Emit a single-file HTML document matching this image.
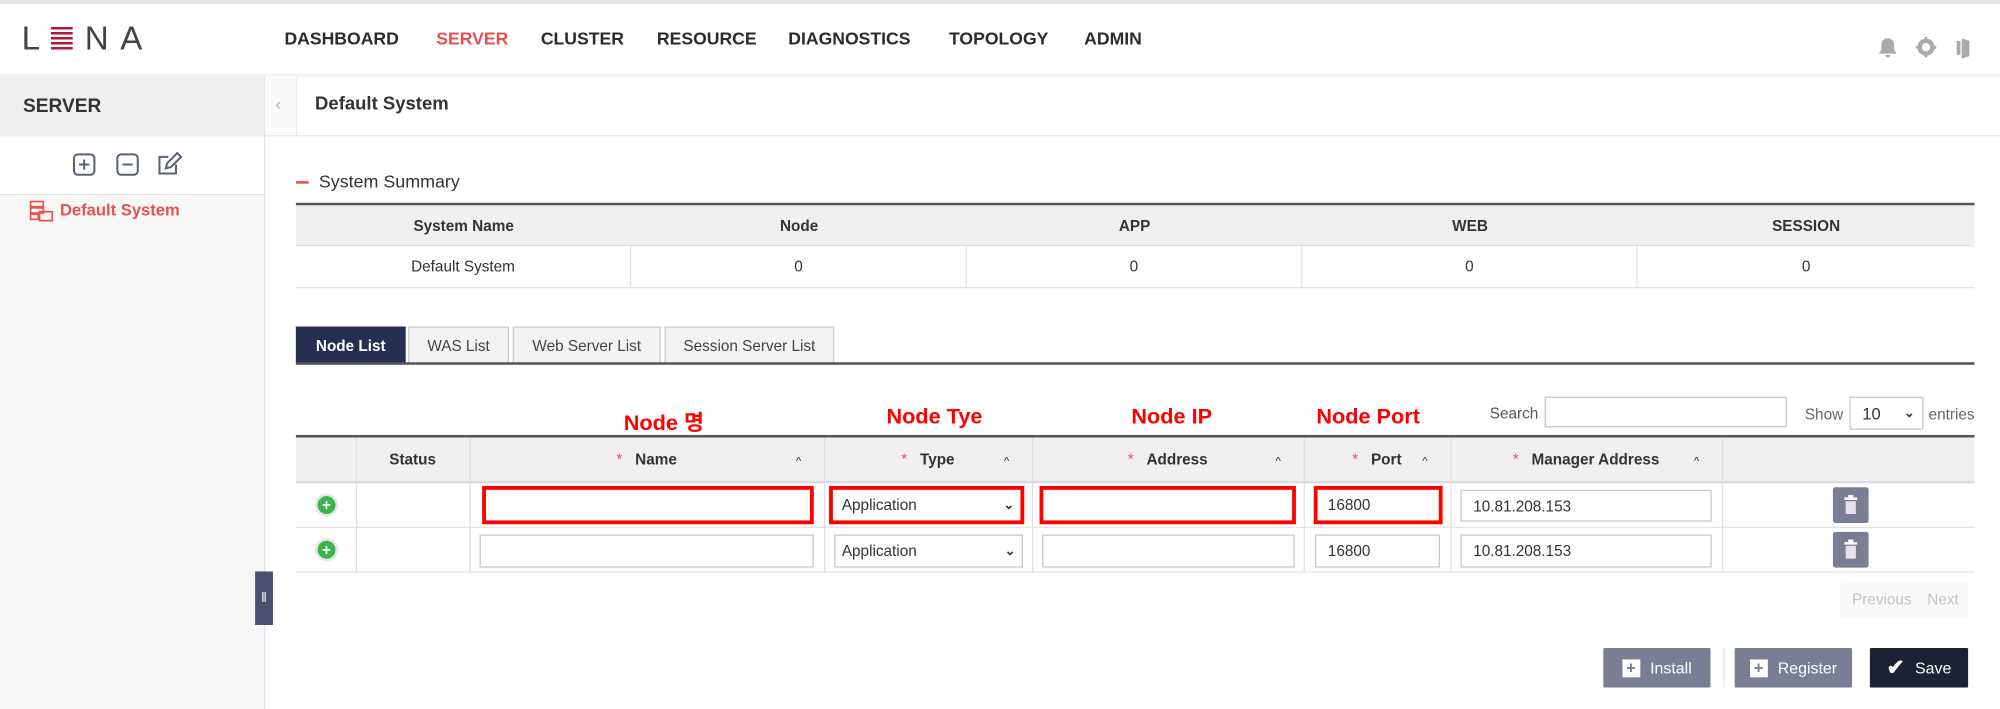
<!DOCTYPE html>
<html><head><meta charset="utf-8">
<style>
html,body{margin:0;padding:0;width:2000px;height:709px;overflow:hidden;background:#fff}
#w{position:absolute;left:0;top:0;width:1568px;height:556px;transform:scale(1.27551);transform-origin:0 0;font-family:"Liberation Sans","Noto Sans CJK KR",sans-serif;color:#333;font-size:12px}
.a{position:absolute}
.nav{top:23px;font-size:13.8px;font-weight:bold;color:#2b2b2b}
.th{background:#f0f0f0;font-weight:bold;font-size:12px;color:#333}
.cell{position:absolute;display:flex;align-items:center;justify-content:center;box-sizing:border-box}
.inp{position:absolute;box-sizing:border-box;border:1px solid #c8c8c8;background:#fff;font-size:12px;padding-left:9px;display:flex;align-items:center}
.red{border:3px solid #f00}
.lab{position:absolute;top:317px;color:#f00;font-weight:bold;font-size:17px}
.tab{position:absolute;top:256px;height:29px;box-sizing:border-box;border:1px solid #ccc;border-bottom:none;background:#f3f3f3;font-size:12px;display:flex;align-items:center;justify-content:center;color:#444}
.star{color:#e0506a;margin-right:10px;font-weight:normal}
.car{position:absolute;font-size:9px;color:#333}
.plus{width:14px;height:14px;border-radius:50%;background:#3bb44a;box-shadow:0 0 0 2px #e5e5e5;color:#fff;font-weight:bold;font-size:12px;line-height:14px;text-align:center}
.del{position:absolute;width:28px;height:28px;background:#7a7e95;border-radius:2px}
.btn{position:absolute;top:508px;height:31px;color:#fff;font-size:12.5px;display:flex;align-items:center;justify-content:center;gap:8px;border-radius:1px}
.pb{width:14px;height:14px;background:#fff;color:#7a7e95;font-weight:bold;font-size:13px;line-height:14px;text-align:center}
</style></head><body><div id="w">
<div class="a" style="left:0;top:0;width:1568px;height:3px;background:#e4e4ea"></div>
<div class="a" style="left:0;top:58px;width:1568px;height:4px;background:linear-gradient(#eee,#fff)"></div>
<!-- logo -->
<div class="a" style="left:17px;top:15px;font-size:26px;color:#444;letter-spacing:9px;font-weight:300">L<span style="display:inline-block;width:17px;height:19px;vertical-align:-1px;background:repeating-linear-gradient(#b3173a 0 2px,transparent 2px 4px);margin-right:9px"></span>NA</div>
<div class="a nav" style="left:223px">DASHBOARD</div>
<div class="a nav" style="left:342px;color:#e8504f">SERVER</div>
<div class="a nav" style="left:424px">CLUSTER</div>
<div class="a nav" style="left:515px">RESOURCE</div>
<div class="a nav" style="left:618px">DIAGNOSTICS</div>
<div class="a nav" style="left:744px">TOPOLOGY</div>
<div class="a nav" style="left:850px">ADMIN</div>
<svg class="a" style="left:1472px;top:28px" width="76" height="18" viewBox="0 0 76 18" fill="#aaa">
<path d="M8 2c-3 0-5 2-5 5v4l-2 3h14l-2-3V7c0-3-2-5-5-5zM6 15h4a2 2 0 0 1-4 0z"/>
<circle cx="38" cy="9" r="5" fill="none" stroke="#aaa" stroke-width="3.5"/><path d="M37 1h2v3h-2zM37 14h2v3h-2zM30 8h3v2h-3zM43 8h3v2h-3z"/>
<path d="M62 4h3v11h-3zM66 2l6 2v12l-6 2z"/></svg>
<!-- sidebar -->
<div class="a" style="left:0;top:60px;width:207px;height:496px;background:#f7f7f7;border-right:1px solid #e6e6e6"></div>
<div class="a" style="left:0;top:60px;width:207px;height:47px;background:#efefef"></div>
<div class="a" style="left:18px;top:75px;font-size:15px;font-weight:bold;color:#333">SERVER</div>
<div class="a" style="left:0;top:107px;width:207px;height:45px;background:#fff;border-bottom:1px solid #e4e4e4"></div>
<svg class="a" style="left:56px;top:119px" width="90" height="20" viewBox="0 0 90 20" fill="none" stroke="#5a6278" stroke-width="1.6">
<rect x="2" y="2" width="16" height="16" rx="3"/><path d="M10 6v8M6 10h8"/>
<rect x="36" y="2" width="16" height="16" rx="3"/><path d="M40 10h8"/>
<path d="M82 10v7H69V4h7"/><path d="M74 13l1-4 8-8 3 3-8 8z"/></svg>
<svg class="a" style="left:23px;top:157px" width="20" height="18" viewBox="0 0 20 18" fill="none" stroke="#e8504f" stroke-width="1.3"><rect x="1" y="1" width="10" height="4"/><rect x="1" y="6" width="10" height="4"/><rect x="1" y="11" width="6" height="4"/><rect x="8" y="9" width="10" height="7"/></svg>
<div class="a" style="left:47px;top:157px;font-size:13px;font-weight:bold;color:#e8504f">Default System</div>
<div class="a" style="left:200px;top:448px;width:14px;height:42px;background:#4a5070;color:#fff;font-size:11px;text-align:center;line-height:42px">ǁ</div>
<!-- main title -->
<div class="a" style="left:208px;top:60px;width:24px;height:47px;background:#fafafa;border-right:1px solid #ececec"></div>
<div class="a" style="left:216px;top:74px;color:#aaa;font-size:13px">‹</div>
<div class="a" style="left:208px;top:106px;width:1360px;height:1px;background:#e6e6e6"></div>
<div class="a" style="left:247px;top:74px;font-size:14.5px;font-weight:bold;color:#333">Default System</div>
<div class="a" style="left:232px;top:142px;width:10px;height:2px;background:#e8504f"></div>
<div class="a" style="left:250px;top:134px;font-size:14px;color:#333">System Summary</div>
<!-- summary table -->
<div class="a" style="left:232px;top:159px;width:1316px;height:2px;background:#555"></div>
<div class="a th" style="left:232px;top:161px;width:1316px;height:31px"></div>
<div class="a" style="left:232px;top:192px;width:1316px;height:1px;background:#ddd"></div>
<div class="a" style="left:232px;top:225px;width:1316px;height:1px;background:#e4e4e4"></div>
<div class="cell" style="left:232px;top:161px;width:263px;height:31px;font-weight:bold">System Name</div>
<div class="cell" style="left:495px;top:161px;width:263px;height:31px;font-weight:bold">Node</div>
<div class="cell" style="left:758px;top:161px;width:263px;height:31px;font-weight:bold">APP</div>
<div class="cell" style="left:1021px;top:161px;width:263px;height:31px;font-weight:bold">WEB</div>
<div class="cell" style="left:1284px;top:161px;width:264px;height:31px;font-weight:bold">SESSION</div>
<div class="cell" style="left:232px;top:193px;width:263px;height:32px;border-right:1px solid #e4e4e4">Default System</div>
<div class="cell" style="left:495px;top:193px;width:263px;height:32px;border-right:1px solid #e4e4e4">0</div>
<div class="cell" style="left:758px;top:193px;width:263px;height:32px;border-right:1px solid #e4e4e4">0</div>
<div class="cell" style="left:1021px;top:193px;width:263px;height:32px;border-right:1px solid #e4e4e4">0</div>
<div class="cell" style="left:1284px;top:193px;width:264px;height:32px">0</div>
<!-- tabs -->
<div class="tab" style="left:232px;width:86px;background:#253050;color:#fff;font-weight:bold;border-color:#253050">Node List</div>
<div class="tab" style="left:320px;width:79px">WAS List</div>
<div class="tab" style="left:402px;width:116px">Web Server List</div>
<div class="tab" style="left:521px;width:133px">Session Server List</div>
<div class="a" style="left:232px;top:284px;width:1316px;height:2px;background:#555"></div>
<!-- labels -->
<div class="lab" style="left:489px">Node 명</div>
<div class="lab" style="left:695px">Node Tye</div>
<div class="lab" style="left:887px">Node IP</div>
<div class="lab" style="left:1032px">Node Port</div>
<div class="a" style="left:1168px;top:317px;color:#555">Search</div>
<div class="inp" style="left:1211px;top:311px;width:190px;height:24px"></div>
<div class="a" style="left:1415px;top:318px;color:#666">Show</div>
<div class="inp" style="left:1450px;top:311px;width:58px;height:26px;font-size:13px">10<span style="position:absolute;right:6px;font-size:10px;font-weight:bold">&#8964;</span></div>
<div class="a" style="left:1512px;top:318px;color:#666">entries</div>
<!-- grid -->
<div class="a" style="left:232px;top:341px;width:1316px;height:2px;background:#555"></div>
<div class="a th" style="left:232px;top:343px;width:1316px;height:34px"></div>
<div class="a" style="left:232px;top:377px;width:1316px;height:2px;background:#dcdce0"></div>
<div class="a" style="left:232px;top:413px;width:1316px;height:1px;background:#e4e4e4"></div>
<div class="a" style="left:232px;top:448px;width:1316px;height:1px;background:#e4e4e4"></div>
<div class="a" style="left:279px;top:343px;width:1px;height:105px;background:#e0e0e0"></div>
<div class="a" style="left:368px;top:343px;width:1px;height:105px;background:#e0e0e0"></div>
<div class="a" style="left:646px;top:343px;width:1px;height:105px;background:#e0e0e0"></div>
<div class="a" style="left:809px;top:343px;width:1px;height:105px;background:#e0e0e0"></div>
<div class="a" style="left:1022px;top:343px;width:1px;height:105px;background:#e0e0e0"></div>
<div class="a" style="left:1137px;top:343px;width:1px;height:105px;background:#e0e0e0"></div>
<div class="a" style="left:1350px;top:343px;width:1px;height:105px;background:#e0e0e0"></div>
<div class="cell" style="left:279px;top:343px;width:89px;height:34px;font-weight:bold">Status</div>
<div class="cell" style="left:368px;top:343px;width:278px;height:34px;font-weight:bold"><span class="star">*</span>Name</div>
<div class="cell" style="left:646px;top:343px;width:163px;height:34px;font-weight:bold"><span class="star">*</span>Type</div>
<div class="cell" style="left:809px;top:343px;width:213px;height:34px;font-weight:bold"><span class="star">*</span>Address</div>
<div class="cell" style="left:1022px;top:343px;width:115px;height:34px;font-weight:bold"><span class="star">*</span>Port</div>
<div class="cell" style="left:1137px;top:343px;width:213px;height:34px;font-weight:bold"><span class="star">*</span>Manager Address</div>
<div class="car" style="left:624px;top:356px">&#94;</div>
<div class="car" style="left:787px;top:356px">&#94;</div>
<div class="car" style="left:1000px;top:356px">&#94;</div>
<div class="car" style="left:1115px;top:356px">&#94;</div>
<div class="car" style="left:1328px;top:356px">&#94;</div>
<!-- row1 -->
<div class="a plus" style="left:249px;top:389px">+</div>
<div class="inp red" style="left:378px;top:381px;width:260px;height:30px"></div>
<div class="inp red" style="left:650px;top:381px;width:153px;height:30px;padding-left:7px">Application<span style="position:absolute;right:5px;font-size:10px;font-weight:bold">&#8964;</span></div>
<div class="inp red" style="left:815px;top:381px;width:201px;height:30px"></div>
<div class="inp red" style="left:1030px;top:381px;width:101px;height:30px;padding-left:8px">16800</div>
<div class="inp" style="left:1145px;top:384px;width:197px;height:25px">10.81.208.153</div>
<div class="del" style="left:1437px;top:382px"><svg width="28" height="28" viewBox="0 0 28 28" fill="#fff"><rect x="9" y="8" width="10" height="2"/><rect x="12" y="6" width="4" height="2"/><path d="M10 11h8v10h-8z" fill="#e8e0f0"/></svg></div>
<!-- row2 -->
<div class="a plus" style="left:249px;top:424px">+</div>
<div class="inp" style="left:376px;top:419px;width:262px;height:26px"></div>
<div class="inp" style="left:654px;top:419px;width:148px;height:26px;padding-left:5px">Application<span style="position:absolute;right:5px;font-size:10px;font-weight:bold">&#8964;</span></div>
<div class="inp" style="left:817px;top:419px;width:198px;height:26px"></div>
<div class="inp" style="left:1031px;top:419px;width:98px;height:26px">16800</div>
<div class="inp" style="left:1145px;top:419px;width:197px;height:26px">10.81.208.153</div>
<div class="del" style="left:1437px;top:417px"><svg width="28" height="28" viewBox="0 0 28 28" fill="#fff"><rect x="9" y="8" width="10" height="2"/><rect x="12" y="6" width="4" height="2"/><path d="M10 11h8v10h-8z" fill="#e8e0f0"/></svg></div>
<!-- pagination -->
<div class="a" style="left:1443px;top:457px;width:100px;height:28px;background:#fafafa"></div>
<div class="a" style="left:1452px;top:463px;color:#c4c4c4">Previous</div>
<div class="a" style="left:1511px;top:463px;color:#c4c4c4">Next</div>
<!-- buttons -->
<div class="btn" style="left:1257px;width:84px;background:#7a7e95"><span class="pb">+</span>Install</div>
<div class="a" style="left:1351px;top:508px;width:1px;height:31px;background:#e4e4e4"></div>
<div class="btn" style="left:1360px;width:92px;background:#7a7e95"><span class="pb">+</span>Register</div>
<div class="btn" style="left:1466px;width:77px;background:#1c2233"><span style="font-size:17px;font-weight:bold">&#10004;</span>Save</div>
</div></body></html>
